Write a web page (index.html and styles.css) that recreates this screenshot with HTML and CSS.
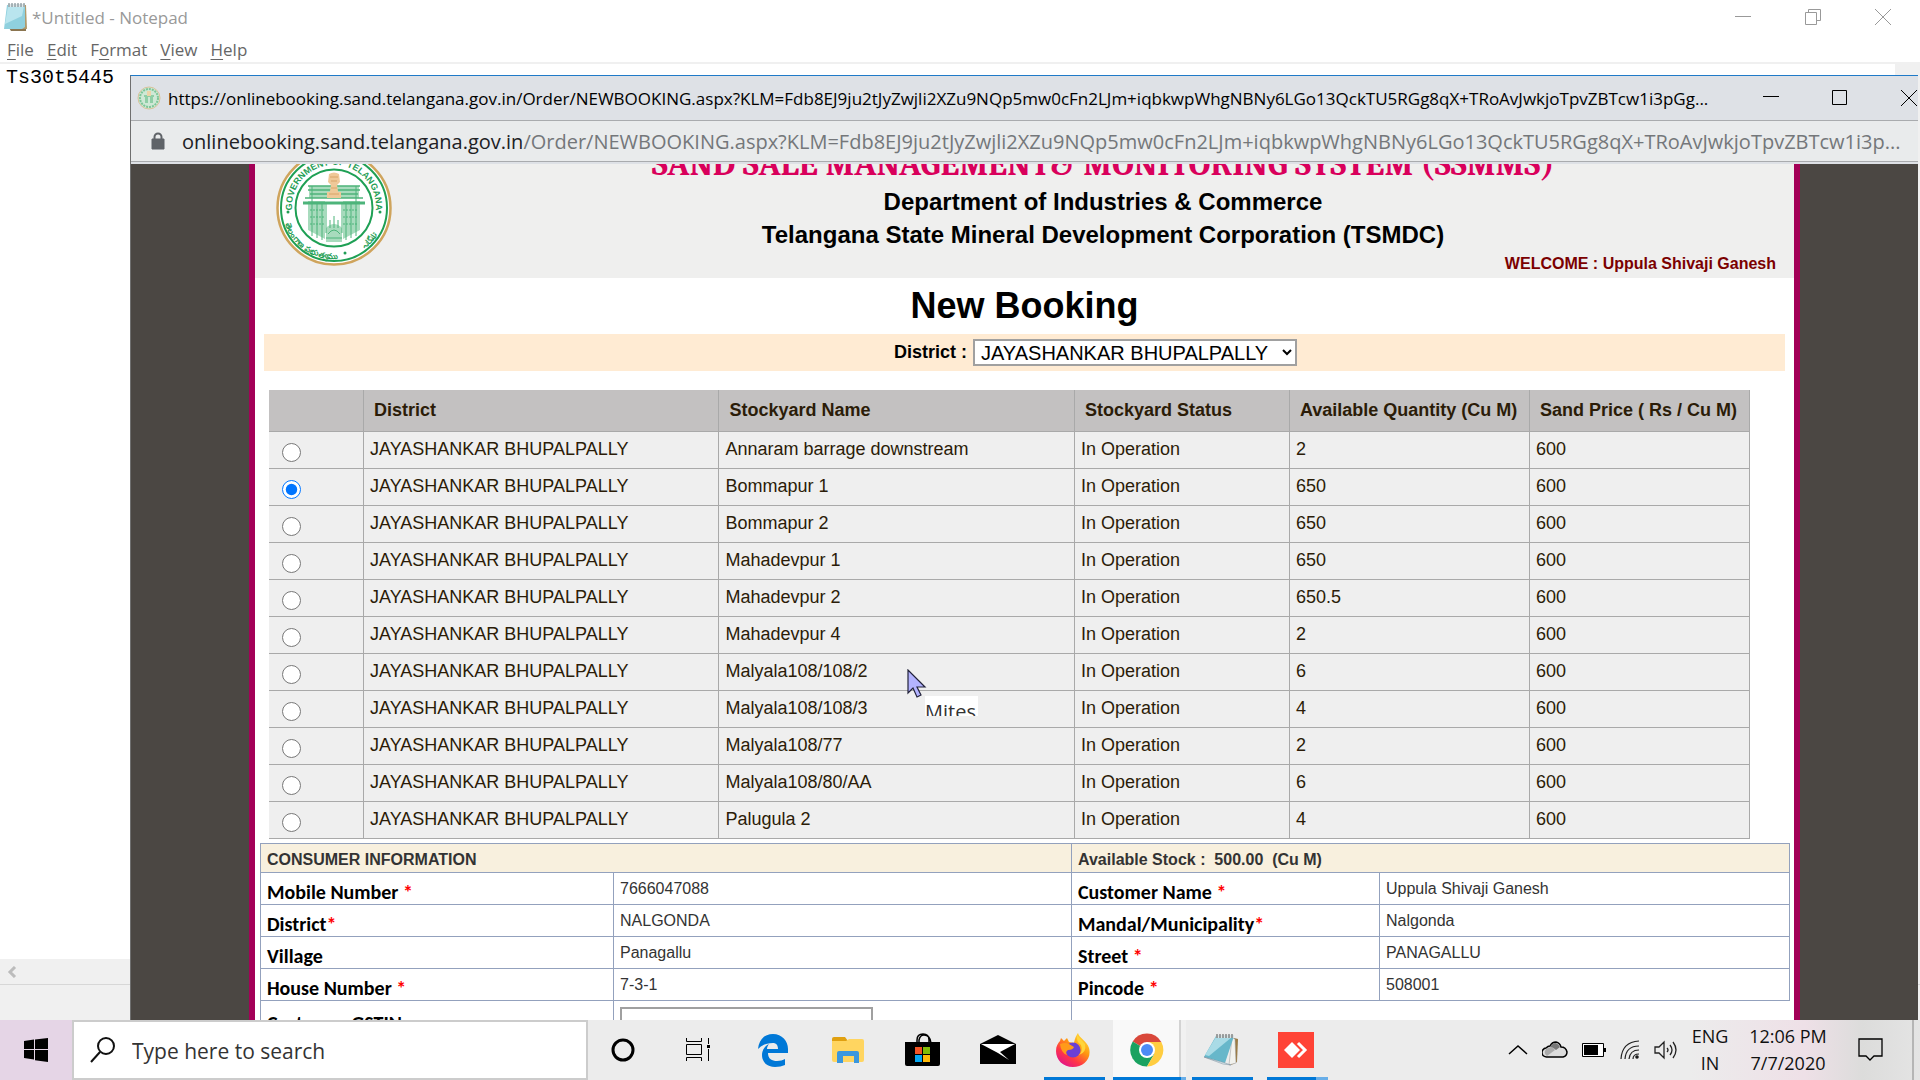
FILE: index.html
```html
<!DOCTYPE html>
<html lang="en">
<head>
<meta charset="utf-8">
<title>New Booking</title>
<link rel="stylesheet" href="styles.css">
</head>
<body>
<div class="desktop">
  <section class="notepad">
    <header class="np-title">
      <svg class="np-icon" width="24" height="30" viewBox="0 0 24 30"><path d="M6 26h17v3H8z" fill="#8b7550"/><path d="M5 3h18l1 24H4z" fill="#b09a6c"/><path d="M4 3h18v22l-3 2H1z" fill="#8fd0de"/><path d="M5 4h16l-2 10L2 22z" fill="#b9e5ee"/><path d="M5 2h17v3H5z" fill="#dfe7e9"/><path d="M6 1v4M9 1v4M12 1v4M15 1v4M18 1v4M21 1v4" stroke="#6b7d82"/></svg>
      <span class="np-name">*Untitled - Notepad</span>
      <div class="win-buttons np-buttons">
        <button aria-label="Minimize"><svg width="16" height="16"><path d="M0 7.500h16" stroke="currentColor"/></svg></button>
        <button aria-label="Restore"><svg width="16" height="16" fill="none" stroke="currentColor"><path d="M.5 3.500h11v12H.5zM3.500 3V.5h12v11H12"/></svg></button>
        <button aria-label="Close"><svg width="16" height="16"><path d="M0 0l16 16M16 0L0 16" stroke="currentColor"/></svg></button>
      </div>
    </header>
    <nav class="np-menu">
      <button><u>F</u>ile</button><button><u>E</u>dit</button><button>F<u>o</u>rmat</button><button><u>V</u>iew</button><button><u>H</u>elp</button>
    </nav>
    <div class="np-body">
      <textarea class="np-text" aria-label="Text editor" spellcheck="false">Ts30t5445</textarea>
      <div class="np-vscroll"></div>
    </div>
    <div class="np-hscroll"><svg width="10" height="12"><path d="M8 1L3 6l5 5" fill="none" stroke="#bcbcbc" stroke-width="3"/></svg></div>
    <footer class="np-status"></footer>
  </section>

  <section class="browser">
    <header class="br-title">
      <svg class="favicon" width="24" height="24" viewBox="0 0 24 24"><circle cx="12" cy="12" r="11" fill="#cfe8d6" stroke="#d8c39a"/><circle cx="12" cy="12" r="9" fill="none" stroke="#7cc698" stroke-width="2" stroke-dasharray="2 1"/><path d="M7 9h10v2H7zM8 11h3v6H8zM13 11h3v6h-3z" fill="#8fcea6"/><path d="M10 5h4v5h-4z" fill="#ecd3a8"/></svg>
      <span class="br-name">https://onlinebooking.sand.telangana.gov.in/Order/NEWBOOKING.aspx?KLM=Fdb8EJ9ju2tJyZwjli2XZu9NQp5mw0cFn2LJm+iqbkwpWhgNBNy6LGo13QckTU5RGg8qX+TRoAvJwkjoTpvZBTcw1i3pGg...</span>
      <div class="win-buttons br-buttons">
        <button aria-label="Minimize"><svg width="16" height="16"><path d="M0 6.500h16" stroke="currentColor"/></svg></button>
        <button aria-label="Maximize"><svg width="16" height="16"><path d="M.5.5h14v14H.5z" fill="none" stroke="currentColor"/></svg></button>
        <button aria-label="Close"><svg width="16" height="16"><path d="M0 0l16 16M16 0L0 16" stroke="currentColor"/></svg></button>
      </div>
    </header>
    <div class="br-url">
      <svg width="14" height="18" viewBox="0 0 14 18"><path d="M1 7h12v10H1z" fill="#5f6368" stroke="#5f6368" stroke-linejoin="round"/><path d="M3.500 8V5a3.500 3.500 0 0 1 7 0v3" fill="none" stroke="#5f6368" stroke-width="2"/></svg>
      <span class="url"><b>onlinebooking.sand.telangana.gov.in</b>/Order/NEWBOOKING.aspx?KLM=Fdb8EJ9ju2tJyZwjli2XZu9NQp5mw0cFn2LJm+iqbkwpWhgNBNy6LGo13QckTU5RGg8qX+TRoAvJwkjoTpvZBTcw1i3p...</span>
    </div>
    <div class="viewport">
      <main class="page">
        <header class="masthead">
          <svg class="seal" width="116" height="116" viewBox="0 0 116 116">
            <defs><path id="arc-top" d="M17.500 68A42 42 0 1 1 98.500 68"/><path id="arc-bottom" d="M8 70A51 51 0 0 0 67 108"/><path id="arc-right" d="M72 107A51 51 0 0 0 108 68"/></defs>
            <circle cx="58" cy="58" r="56.500" fill="#fff" stroke="#cfa45c" stroke-width="2.500"/>
            <circle cx="58" cy="58" r="53" fill="none" stroke="#1fa055" stroke-width="2"/>
            <circle cx="58" cy="58" r="38.500" fill="none" stroke="#1fa055" stroke-width="2"/>
            <g fill="#1f9e55">
              <text class="seal-text"><textPath href="#arc-top" startOffset="50%" text-anchor="middle">GOVERNMENT OF TELANGANA</textPath></text>
              <text class="seal-small"><textPath href="#arc-bottom" startOffset="50%" text-anchor="middle">తెలంగాణ ప్రభుత్వము</textPath></text>
              <text class="seal-small"><textPath href="#arc-right" startOffset="50%" text-anchor="middle">تلنگانہ</textPath></text>
              <circle cx="12" cy="62" r="1.500"/><circle cx="104" cy="62" r="1.500"/><circle cx="69" cy="103" r="1.500"/>
            </g>
            <g fill="#a8dbbd"><path d="M33 36h50v12H33z"/><path d="M32 51h17v38l-17-9zM67 51h17v29l-17 9z"/><path d="M50 78q8-8 16 0v14H50z"/></g>
            <g fill="none" stroke="#4db47a"><path d="M27 53h62" stroke-width="3"/><path d="M32 36h52M32 40h52M34 44h48M29 48h58" stroke-width="1.500"/><path d="M36 36v50M41 52v36M46 52v38M70 52v38M75 52v36M80 36v50"/><path d="M34 60h15M34 67h15M34 74h15M67 60h15M67 67h15M67 74h15" stroke-dasharray="2 1"/><path d="M50 53v30M66 53v30M54 70v8M58 66v12M62 70v8M52 84q6-8 12 0M50 88h16"/></g>
            <g fill="#efc898"><path d="M53 24q5-3 10 0l1 8-3 3 2 12h-10l2-12-3-3z"/><path d="M51 42h14v6H51z"/></g><path d="M54 27h8M55 31h6M55 38h6M53 44h10" stroke="#d8a468"/>
          </svg>
          <div class="masthead-text">
            <h1>SAND SALE MANAGEMENT&amp; MONITORING SYSTEM (SSMMS)</h1>
            <p class="dept">Department of Industries &amp; Commerce</p>
            <p class="dept">Telangana State Mineral Development Corporation (TSMDC)</p>
            <p class="welcome">WELCOME : Uppula Shivaji Ganesh</p>
          </div>
        </header>
        <h2>New Booking</h2>
        <div class="district-bar">
          <label for="district">District :</label>
          <select id="district"><option>JAYASHANKAR BHUPALPALLY</option></select>
        </div>
        <table class="stock">
          <colgroup><col class="c-pick"><col class="c-name"><col class="c-name"><col class="c-status"><col class="c-qty"><col class="c-price"></colgroup>
          <thead><tr><th></th><th>District</th><th>Stockyard Name</th><th>Stockyard Status</th><th>Available Quantity (Cu M)</th><th>Sand Price ( Rs / Cu M)</th></tr></thead>
          <tbody>
            <tr><td><input type="radio" name="yard" aria-label="Annaram barrage downstream"></td><td>JAYASHANKAR BHUPALPALLY</td><td>Annaram barrage downstream</td><td>In Operation</td><td>2</td><td>600</td></tr>
            <tr><td><input type="radio" name="yard" aria-label="Bommapur 1" checked></td><td>JAYASHANKAR BHUPALPALLY</td><td>Bommapur 1</td><td>In Operation</td><td>650</td><td>600</td></tr>
            <tr><td><input type="radio" name="yard" aria-label="Bommapur 2"></td><td>JAYASHANKAR BHUPALPALLY</td><td>Bommapur 2</td><td>In Operation</td><td>650</td><td>600</td></tr>
            <tr><td><input type="radio" name="yard" aria-label="Mahadevpur 1"></td><td>JAYASHANKAR BHUPALPALLY</td><td>Mahadevpur 1</td><td>In Operation</td><td>650</td><td>600</td></tr>
            <tr><td><input type="radio" name="yard" aria-label="Mahadevpur 2"></td><td>JAYASHANKAR BHUPALPALLY</td><td>Mahadevpur 2</td><td>In Operation</td><td>650.5</td><td>600</td></tr>
            <tr><td><input type="radio" name="yard" aria-label="Mahadevpur 4"></td><td>JAYASHANKAR BHUPALPALLY</td><td>Mahadevpur 4</td><td>In Operation</td><td>2</td><td>600</td></tr>
            <tr><td><input type="radio" name="yard" aria-label="Malyala108/108/2"></td><td>JAYASHANKAR BHUPALPALLY</td><td>Malyala108/108/2</td><td>In Operation</td><td>6</td><td>600</td></tr>
            <tr><td><input type="radio" name="yard" aria-label="Malyala108/108/3"></td><td>JAYASHANKAR BHUPALPALLY</td><td>Malyala108/108/3</td><td>In Operation</td><td>4</td><td>600</td></tr>
            <tr><td><input type="radio" name="yard" aria-label="Malyala108/77"></td><td>JAYASHANKAR BHUPALPALLY</td><td>Malyala108/77</td><td>In Operation</td><td>2</td><td>600</td></tr>
            <tr><td><input type="radio" name="yard" aria-label="Malyala108/80/AA"></td><td>JAYASHANKAR BHUPALPALLY</td><td>Malyala108/80/AA</td><td>In Operation</td><td>6</td><td>600</td></tr>
            <tr><td><input type="radio" name="yard" aria-label="Palugula 2"></td><td>JAYASHANKAR BHUPALPALLY</td><td>Palugula 2</td><td>In Operation</td><td>4</td><td>600</td></tr>
          </tbody>
        </table>
        <table class="consumer">
          <colgroup><col class="k-left"><col class="v-left"><col class="k-right"><col class="v-right"></colgroup>
          <thead><tr><th colspan="2">CONSUMER INFORMATION</th><th colspan="2">Available Stock :&nbsp; 500.00&nbsp; (Cu M)</th></tr></thead>
          <tbody>
            <tr><th>Mobile Number <i>*</i></th><td>7666047088</td><th>Customer Name <i>*</i></th><td>Uppula Shivaji Ganesh</td></tr>
            <tr><th>District<i>*</i></th><td>NALGONDA</td><th>Mandal/Municipality<i>*</i></th><td>Nalgonda</td></tr>
            <tr><th>Village</th><td>Panagallu</td><th>Street <i>*</i></th><td>PANAGALLU</td></tr>
            <tr><th>House Number <i>*</i></th><td>7-3-1</td><th>Pincode <i>*</i></th><td>508001</td></tr>
            <tr class="gst"><th><label for="gstin">Customer GSTIN</label></th><td><input type="text" id="gstin"></td><td colspan="2" class="open"></td></tr>
          </tbody>
        </table>
      </main>
    </div>
  </section>

  <svg class="cursor" width="20" height="30" viewBox="0 0 20 30"><path d="M1 1v23l5-5 4 9 4-2-4-8h8z" fill="#b3b3ff" stroke="#22223a" stroke-width="1.200"/></svg>
  <div class="pointer-tag">Mites</div>
</div>

<footer class="taskbar">
  <button class="start" aria-label="Start"><svg width="24" height="24"><path d="M0 3l10-1.500V11H0zM11 1.400L24 0v11H11zM0 12h10v9.500L0 20zM11 12h13v12l-13-1.700z"/></svg></button>
  <div class="search">
    <svg width="26" height="26" fill="none" stroke="#111" stroke-width="2"><circle cx="16" cy="9" r="8"/><path d="M10 15L1 25"/></svg>
    <input type="text" placeholder="Type here to search" aria-label="Search">
  </div>
  <nav class="apps">
    <button aria-label="Cortana"><svg width="24" height="24"><circle cx="12" cy="12" r="10" fill="none" stroke="#000" stroke-width="3"/></svg></button>
    <button aria-label="Task View"><svg width="26" height="24" fill="none" stroke="#000"><path d="M1.500 0v3.500h15V0M1.500 6.500h15v10h-15zM1.500 23v-3.500h15V23M23.500 0v6M23.500 11v12"/><path d="M22 7h3v3h-3z" fill="#000" stroke="none"/></svg></button>
    <button aria-label="Edge"><svg width="32" height="34" viewBox="0 0 32 34"><path d="M1 16C2 6 8 1 16 1c9 0 15 7 15 15v4H11c0 6 4 8 9 8 3 0 6-1 8-2v6c-3 1-6 2-10 2C10 34 5 29 5 22c0-5 3-9 7-11-1 1-2 3-2 5h11c0-4-2-6-5-6-6 0-11 2-15 6z" fill="#0078d7"/></svg></button>
    <button aria-label="File Explorer"><svg width="32" height="28"><path d="M0 3a2 2 0 0 1 2-2h11l3 4v3H0z" fill="#e0a010"/><path d="M0 5h14l3-2h13a2 2 0 0 1 2 2v19a2 2 0 0 1-2 2H2a2 2 0 0 1-2-2z" fill="#ffd560"/><path d="M5 27V17a2 2 0 0 1 2-2h18a2 2 0 0 1 2 2v10h-5v-7H11v7z" fill="#3b97de"/></svg></button>
    <button aria-label="Store"><svg width="36" height="34"><path d="M12 10V7q0-6 6-6t6 6v3M14 10V7q1-5 5-5 6 0 7 8" fill="none" stroke="#000" stroke-width="1.500"/><path d="M0 9h35v22a2 2 0 0 1-2 2H2a2 2 0 0 1-2-2z"/><path d="M10 14h7v7h-7z" fill="#f35325"/><path d="M18 14h7v7h-7z" fill="#81bc06"/><path d="M10 22h7v7h-7z" fill="#05a6f0"/><path d="M18 22h7v7h-7z" fill="#ffba08"/></svg></button>
    <button aria-label="Mail"><svg width="36" height="30"><path d="M0 9L18 0l18 9v20H0z"/><path d="M1 9h34L20 17l9 8-11-7z" fill="#fff"/></svg></button>
    <button class="running" aria-label="Firefox"><svg width="36" height="36" viewBox="0 0 36 36"><defs><linearGradient id="fox" x1="1" y1="0" x2=".3" y2="1"><stop offset="0" stop-color="#fff44f"/><stop offset=".45" stop-color="#ff980e"/><stop offset=".75" stop-color="#ff3647"/><stop offset="1" stop-color="#e31587"/></linearGradient></defs><path d="M18 35C8 35 1 28 1 19c0-5 2-8 4-10l1-3 3 3 3-3 2 4 5 1c1-5 2-7 4-10 1 5 9 8 11 15 3 11-6 19-16 19z" fill="url(#fox)"/><circle cx="18" cy="18" r="7.500" fill="#6b3fd4"/><path d="M5 12q5-2 9 0l5 3q-1 3-6 3-3 2-1 5-6-2-7-11z" fill="#ff9a1a"/><path d="M22 3q-1 7 4 10 2 6-2 10 8-3 6-11z" fill="#ffd53a"/></svg></button>
    <button class="running active" aria-label="Chrome"><svg width="34" height="34" viewBox="0 0 34 34"><path d="M17 17L2.700 8.500A16.500 16.500 0 0 1 31.300 9z" fill="#d9483b"/><path d="M17 17L2.700 8.500A16.500 16.500 0 0 0 17 33.500l7-12z" fill="#1aa260"/><path d="M17 9h14.300A16.500 16.500 0 0 1 17 33.500l7-12z" fill="#ffcd41"/><circle cx="17" cy="17" r="8" fill="#fff"/><circle cx="17" cy="17" r="6" fill="#4c8bf5"/></svg></button>
    <button class="running" aria-label="Notepad"><svg width="34" height="32" viewBox="0 0 34 32"><path d="M30 4l4 1-1 23-6 3z" fill="#9b7b45"/><path d="M28 4l3 1 1 24-7 2z" fill="#f2f2ee" stroke="#999" stroke-width=".5"/><path d="M12 2h18l-9 27L0 23z" fill="#67b7ca"/><path d="M12 3h16L5 22l-4-1z" fill="#a9dbe6"/><path d="M12 1h18v3H12z" fill="#d9e3e4"/><path d="M13 0v4M16 0v4M19 0v4M22 0v4M25 0v4M28 0v4" stroke="#555"/><path d="M0 23l21 6 6 2-8-1z" fill="#dfeff2" stroke="#789" stroke-width=".5"/></svg></button>
    <button class="running grouped" aria-label="AnyDesk"><svg width="36" height="36"><path d="M0 0h36v36H0z" fill="#ff4336"/><path d="M14 10l8 8-8 8-8-8z" fill="#fff"/><path d="M20 11l7 7-7 7" fill="none" stroke="#fff" stroke-width="3"/></svg></button>
  </nav>
  <div class="tray">
    <button aria-label="Show hidden icons"><svg width="20" height="12"><path d="M1 10l9-8 9 8" fill="none" stroke="#000" stroke-width="1.500"/></svg></button>
    <button aria-label="OneDrive"><svg width="26" height="18"><path d="M5 16a4 4 0 0 1-1-9q2-2 4-2 2-4 6-4 4 1 5 5 5 0 6 5 0 4-4 5z" fill="#dcdcdc" stroke="#000" stroke-width="1.500"/><path d="M4 8q6-4 9 1l-8 6q-4-3-1-7z" fill="#aaa"/><path d="M8 6q5-8 10 0l-4 3q-3-3-6-3z" fill="#777"/></svg></button>
    <button aria-label="Battery"><svg width="24" height="14"><path d="M.5.500h21v13H.5z" fill="#fff" stroke="#000"/><path d="M2 2h14v10H2zM22 5h2v4h-2z"/></svg></button>
    <button aria-label="Wi-Fi"><svg width="20" height="20" fill="none" stroke="#222" stroke-width="1.200"><path d="M1 19Q2 2 19 1M5 19Q6 6 19 6M9 19Q10 10 19 10M13 19Q13 14 19 14"/><circle cx="17" cy="17" r="1.200" fill="#000"/></svg></button>
    <button aria-label="Volume"><svg width="24" height="20" fill="none" stroke="#222" stroke-width="1.300"><path d="M1 7h4l5-5v16l-5-5H1zM13 8q2 2 0 4M16 5q4 5 0 10M19 2q6 8 0 16"/></svg></button>
    <div class="lang">ENG<br>IN</div>
    <div class="clock">12:06 PM<br>7/7/2020</div>
    <button class="action" aria-label="Notifications"><svg width="26" height="26"><path d="M1 2h23v17h-8l-4 4-4-4H1z" fill="none" stroke="#000" stroke-width="1.300"/></svg></button>
    <button class="show-desktop" aria-label="Show desktop"></button>
  </div>
</footer>
</body>
</html>
```
FILE: styles.css
```css
* { box-sizing: border-box; }
body {
  margin: 0;
  height: 100vh;
  display: flex;
  flex-direction: column;
  overflow: hidden;
  font-family: "Segoe UI", "Open Sans", "Noto Sans", sans-serif;
}
button { padding: 0; border: 0; background: none; font: inherit; color: inherit; }
svg { display: block; flex: none; }
h1, h2, p { margin: 0; }
.desktop { flex: 1; position: relative; min-height: 0; overflow: hidden; }

/* Notepad */
.notepad { height: 100%; display: flex; flex-direction: column; background: #fff; }
.np-title { height: 34px; display: flex; align-items: center; gap: 5px; padding-left: 3px; color: #999; font-size: 17px; }
.np-buttons { margin-left: auto; gap: 54px; padding-right: 29px; color: #999; }
.win-buttons { display: flex; align-items: center; }
.np-menu { height: 30px; display: flex; gap: 13px; padding: 2px 0 0 7px; border-bottom: 2px solid #f0f0f0; color: #666; font-size: 17px; }
.np-menu u { text-underline-offset: 3px; text-decoration-thickness: 1px; }
.np-body { flex: 1; display: flex; min-height: 0; }
.np-text { flex: 1; border: 0; outline: 0; resize: none; padding: 2px 6px; font: 20px/24px Consolas, "Liberation Mono", monospace; color: #000; }
.np-vscroll { width: 25px; background: #f0f0f0; }
.np-hscroll { height: 25px; padding: 7px 7px 0; background: #f0f0f0; }
.np-status { height: 36px; background: #f0f0f0; border-top: 1px solid #d7d7d7; }

/* Browser window */
.browser {
  position: absolute;
  inset: 75px 2px 0 130px;
  display: flex;
  flex-direction: column;
  border-top: 1px solid #1f7ac8;
  border-left: 1px solid #6f6f6f;
  background: #dee1e6;
}
.br-title { height: 45px; display: flex; align-items: center; padding-left: 6px; border-bottom: 1px solid #a9abae; font-size: 17px; white-space: nowrap; }
.favicon { margin-right: 7px; }
.br-name { flex: 1; min-width: 0; overflow: hidden; }
.br-buttons { gap: 53px; padding: 0 1px 0 28px; }
.br-url { height: 41px; display: flex; align-items: center; gap: 17px; padding-left: 20px; background: #e9ebec; border-bottom: 1px solid #a9abae; white-space: nowrap; color: #74777a; font-size: 20px; }
.url { overflow: hidden; }
.url b { font-weight: 400; color: #202124; }
.viewport { flex: 1; min-height: 0; margin-top: 2px; overflow: hidden; background: #4b4743; }

/* Booking page */
.page {
  margin: -20px 118px 0;
  padding-bottom: 40px;
  border: solid #a30057;
  border-width: 0 6px;
  background: #fff;
  font-family: Arial, "Liberation Sans", sans-serif;
}
.masthead { display: flex; gap: 20px; height: 134px; padding-left: 21px; background: #efefee; }
.seal { margin-top: 6px; }
.seal-text { font: bold 9px Arial, "Liberation Sans", sans-serif; }
.seal-small { font: bold 8px "Noto Sans", "Open Sans", sans-serif; }
.masthead-text { flex: 1; text-align: center; }
.masthead h1 { color: #d9005b; font: bold 34px/41px Cambria, "Liberation Serif", serif; white-space: nowrap; }
.dept { font-size: 24px; line-height: 33px; font-weight: bold; }
.welcome { padding-right: 18px; text-align: right; color: #7b0000; font-size: 16px; line-height: 26px; font-weight: bold; }
.page h2 { font-size: 36px; line-height: 56px; text-align: center; }
.district-bar { display: flex; justify-content: center; align-items: center; gap: 6px; height: 37px; margin: 0 9px; padding-left: 142px; background: #ffebd3; }
.district-bar label { font-size: 18px; font-weight: bold; }
.district-bar select { width: 324px; height: 27px; padding: 0 0 0 2px; border: 2px solid #a0a0a0; background: #fff; color: #000; font: 20px Arial, "Liberation Sans", sans-serif; }

.stock { width: calc(100% - 58px); margin: 19px 44px 4px 14px; table-layout: fixed; border-collapse: separate; border-spacing: 0; font-size: 18px; line-height: 20px; color: #2b1c08; }
.c-pick { width: 95px; }
.c-name { width: 24%; }
.c-status { width: 215px; }
.c-qty { width: 240px; }
.c-price { width: 220px; }
.stock th, .stock td { border: solid #a9a9a9; border-width: 0 1px 1px 0; text-align: left; white-space: nowrap; }
.stock th { height: 42px; padding: 0 10px 2px; background: #c3c1c1; }
.stock td { height: 37px; padding: 7px 6px 9px; background: #efefef; vertical-align: top; }
.stock td:first-child { padding: 11px 13px 0; }
.stock input { display: block; width: 19px; height: 19px; margin: 0; }

.consumer { width: calc(100% - 9px); margin: 0 4px 0 5px; table-layout: fixed; border-collapse: collapse; color: #333; font-size: 16px; line-height: 20px; }
.k-left { width: 353px; }
.v-left { width: 458px; }
.k-right { width: 308px; }
.consumer th, .consumer td { height: 32px; padding: 0 6px; border: 1px solid #93a1bd; text-align: left; }
.consumer thead th { height: 29px; padding-top: 4px; background: #f8f0de; }
.consumer tbody th { padding-top: 6px; color: #000; font: bold 20px/20px Calibri, Carlito, Lato, sans-serif; }
.consumer i { color: #f00; font-style: normal; }
.consumer tbody .gst th { height: 50px; padding-top: 12px; vertical-align: top; }
.consumer .gst td { padding-top: 6px; vertical-align: top; }
.consumer .open { border-right: 0; }
.consumer input { display: block; width: 253px; height: 30px; border: 2px solid #a0a0a0; }

/* Pointer */
.cursor { position: absolute; left: 907px; top: 669px; }
.pointer-tag { position: absolute; left: 925px; top: 696px; width: 53px; height: 20px; padding-top: 3px; overflow: hidden; background: #fff; color: #333; font-size: 20px; line-height: 26px; }

/* Taskbar */
.taskbar { height: 60px; display: flex; background: linear-gradient(90deg, #ececec 0 88%, #eee0e7 94%, #dcdcdb 97%, #e4e4e4); }
.start { width: 72px; display: grid; place-items: center; background: #e5d5e6; }
.search { width: 516px; display: flex; align-items: center; gap: 16px; padding-left: 16px; background: #fff; border: 2px solid #ccc; }
.search input { flex: 1; min-width: 0; padding: 2px 0 0; border: 0; outline: 0; font: 21px "Segoe UI", "Open Sans", sans-serif; }
.search input::placeholder { color: #333; }
.apps { display: flex; }
.apps button { position: relative; width: 75px; display: grid; place-items: center; padding-right: 5px; }
.running::after { content: ""; position: absolute; left: 6px; right: 8px; bottom: 0; height: 3px; background: #0078d7; }
.apps .active { background: linear-gradient(90deg, #f9f9f9 66px, #d3d3d3 66px 68px, #f1f1f1 68px); width: 73px; }
.active::after { left: 0; right: 0; background: linear-gradient(90deg, #0078d7 68px, #69aee8 68px); }
.grouped::after { background: linear-gradient(90deg, #0078d7 49px, #69aee8 49px); }
.tray { margin-left: auto; display: flex; align-items: center; gap: 14px; color: #111; font-size: 18px; line-height: 27px; text-align: center; }
.lang { width: 44px; margin-left: -4px; }
.clock { width: 84px; }
.action { margin: 0 14px 0 14px; }
.show-desktop { width: 8px; height: 60px; border-left: 2px solid #b5b5b5; }
```
